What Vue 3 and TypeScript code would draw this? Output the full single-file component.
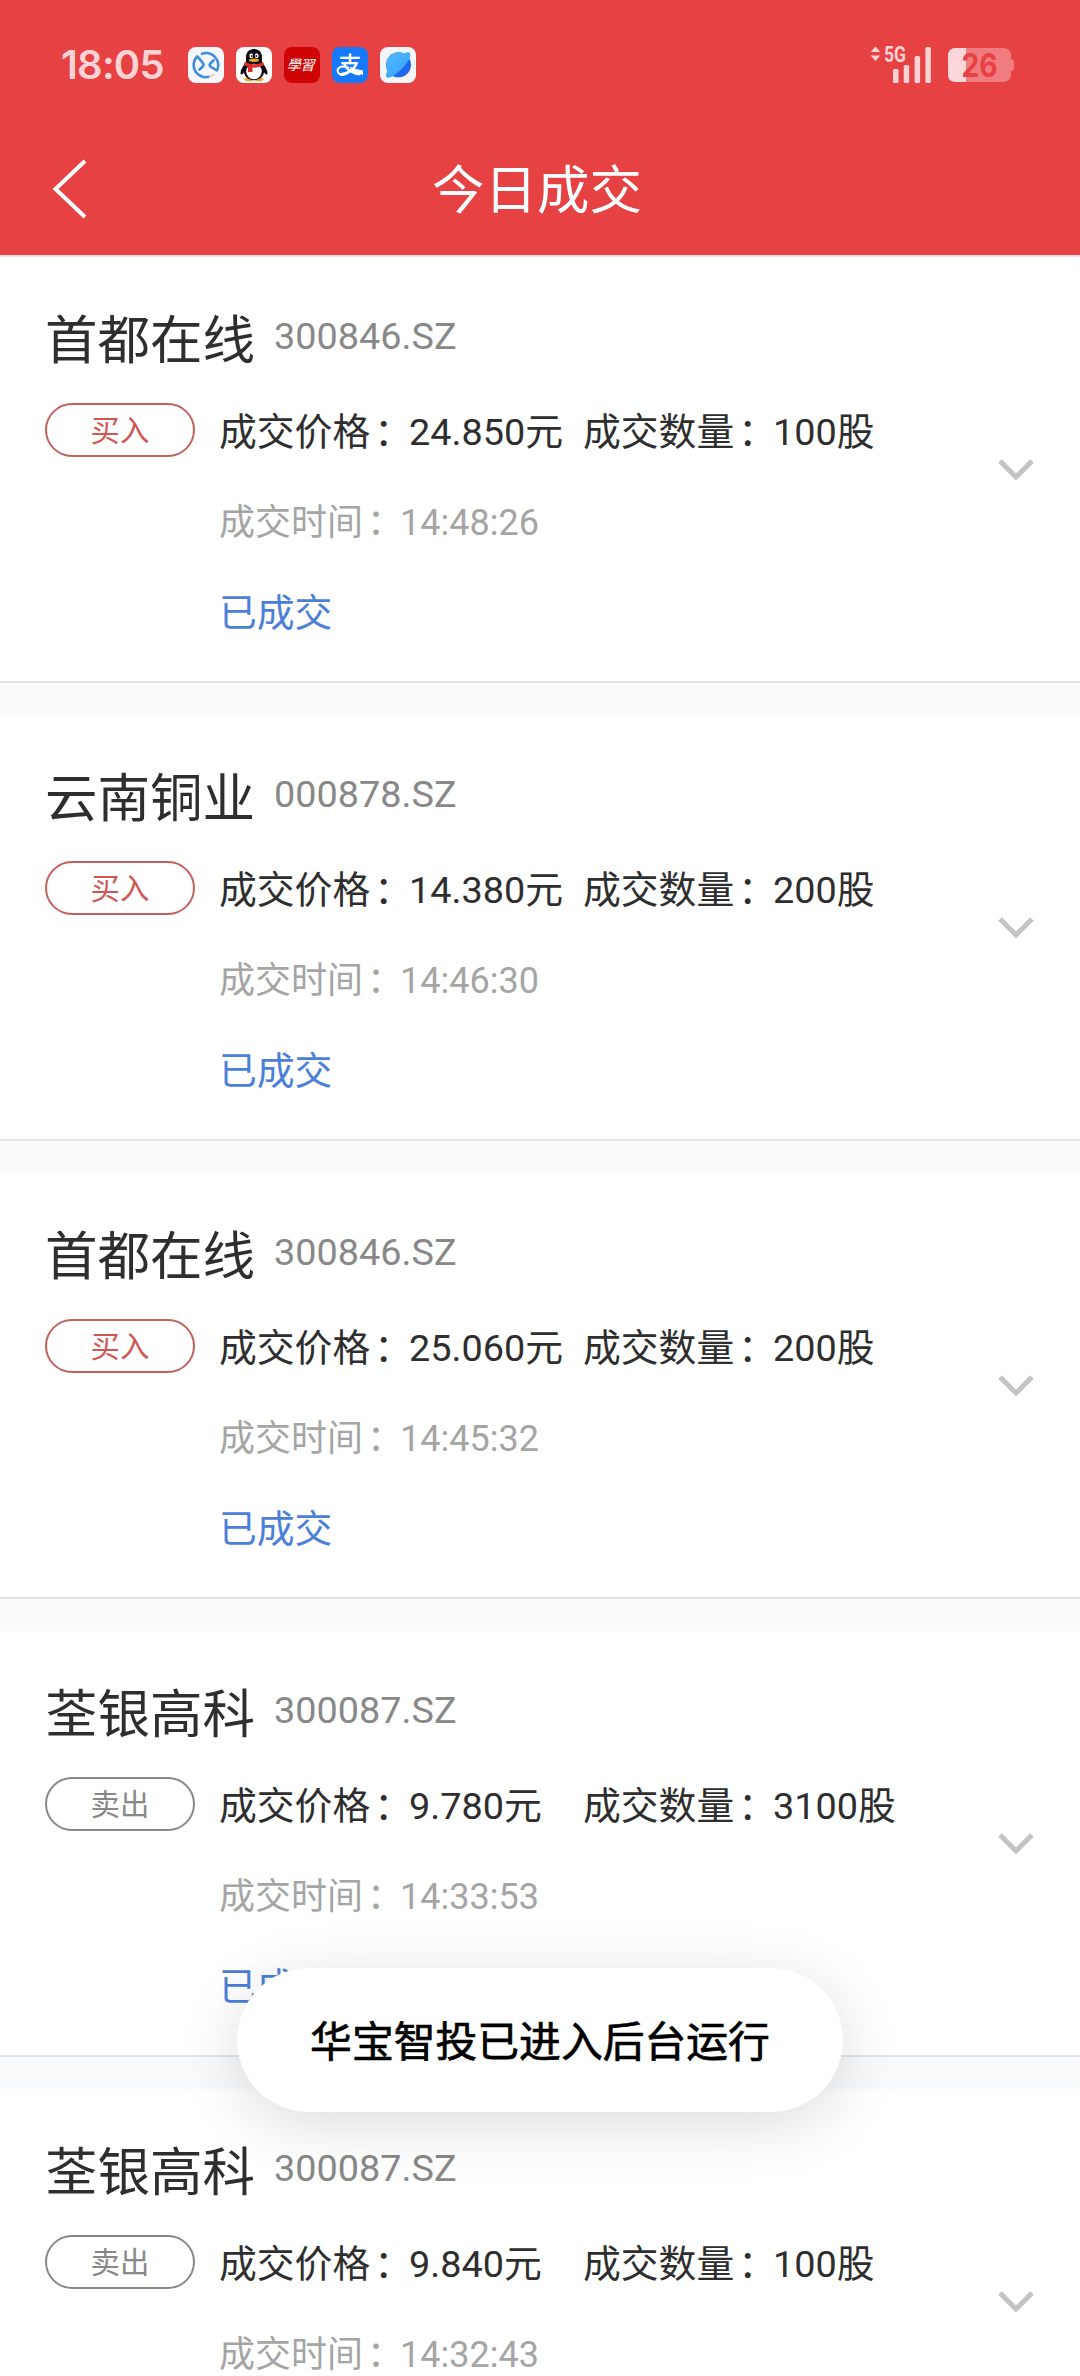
<script setup lang="ts">
interface Trade {
  name: string
  code: string
  side: 'buy' | 'sell'
  price: string
  amount: string
  time: string
}

const trades: Trade[] = [
  { name: '首都在线', code: '300846.SZ', side: 'buy', price: '24.850', amount: '100', time: '14:48:26' },
  { name: '云南铜业', code: '000878.SZ', side: 'buy', price: '14.380', amount: '200', time: '14:46:30' },
  { name: '首都在线', code: '300846.SZ', side: 'buy', price: '25.060', amount: '200', time: '14:45:32' },
  { name: '荃银高科', code: '300087.SZ', side: 'sell', price: '9.780', amount: '3100', time: '14:33:53' },
  { name: '荃银高科', code: '300087.SZ', side: 'sell', price: '9.840', amount: '100', time: '14:32:43' },
]

const sideLabel = { buy: '买入', sell: '卖出' }
</script>

<template>
  <div class="screen">
    <header class="header">
      <div class="status-bar">
        <span class="clock">18:05</span>
        <div class="apps">
          <svg class="app" viewBox="0 0 36 36">
            <rect width="36" height="36" rx="8" fill="#f6f7fa" />
            <g fill="none" stroke="#3f8ce2" stroke-width="2.6" stroke-linecap="round" stroke-linejoin="round">
              <path d="M14 6.800A12.200 12.200 0 0 1 29 23.500L22.300 19.500Q21 18 22.300 16.500L25.500 13.500" />
              <path d="M21 29.800A12.200 12.200 0 0 1 9.300 9.300L14.800 15.800Q16.200 17.800 14.800 19.600L11.500 22.500" />
            </g>
            <path d="M21 29.800Q24.500 29 26.500 27" fill="none" stroke="#f1cfc0" stroke-width="2.400" />
          </svg>
          <svg class="app" viewBox="0 0 36 36">
            <rect width="36" height="36" rx="8" fill="#fff" />
            <ellipse cx="13.500" cy="32.200" rx="5" ry="2" fill="#e9a93a" />
            <ellipse cx="22.500" cy="32.200" rx="5" ry="2" fill="#e9a93a" />
            <path d="M18 2C12.500 2 10 6 10 10.500V15C7 19 4.500 23 4.500 26C4.500 28.500 6.500 27.500 8 25.500C9 30.500 13 33 18 33S27 30.500 28 25.500C29.500 27.500 31.500 28.500 31.500 26C31.500 23 29 19 26 15V10.500C26 6 23.500 2 18 2Z" fill="#0c0c0e" />
            <ellipse cx="18" cy="24.500" rx="7.800" ry="7.800" fill="#fff" />
            <ellipse cx="15.300" cy="8.700" rx="1.900" ry="2.500" fill="#fff" />
            <ellipse cx="20.700" cy="8.700" rx="1.900" ry="2.500" fill="#fff" />
            <circle cx="15.900" cy="9" r="0.900" fill="#111" />
            <circle cx="20.300" cy="9" r="0.900" fill="#111" />
            <ellipse cx="18" cy="13.300" rx="5" ry="1.700" fill="#eda62b" />
            <path d="M8.700 15Q18 19.500 27.300 15L28 18.200Q22 21.300 16.500 20.500V25H12V19.500Q9.500 19 8 18Z" fill="#e02a2c" />
          </svg>
          <svg class="app" viewBox="0 0 36 36">
            <rect width="36" height="36" rx="8" fill="#cf0404" />
            <text class="brush" x="4" y="23.500" transform="skewX(-14) translate(4.500 0)">學習</text>
          </svg>
          <svg class="app" viewBox="0 0 36 36">
            <rect width="36" height="36" rx="8" fill="#1678fb" />
            <text class="pay" x="6.500" y="26">支</text>
            <path d="M17 21Q9 17.500 6 22C4.500 25.500 8 28.600 12 27.700Q16 26.500 19 23" fill="none" stroke="#fff" stroke-width="2" />
            <path d="M18 19.800Q24 22.500 31 23.600V28Q25 27 18.500 23Z" fill="#fff" />
          </svg>
          <svg class="app" viewBox="0 0 36 36">
            <defs>
              <linearGradient id="orb" x1="0" y1="0" x2="1" y2="1">
                <stop offset="0" stop-color="#52bdff" />
                <stop offset="1" stop-color="#359bf8" />
              </linearGradient>
            </defs>
            <rect width="36" height="36" rx="8" fill="#f4f5f7" />
            <circle cx="18.500" cy="17.800" r="12.500" fill="#2167ea" />
            <path d="M24 6.500Q28.500 4.200 30 6.200Q31.200 8 29 12.500Q24 22 13 29Q8.500 31.800 6.600 30.200Q5 28.500 7.500 23.500A12.500 12.500 0 0 1 24 6.500Z" fill="url(#orb)" />
          </svg>
        </div>
        <div class="system">
          <svg class="signal" width="64" height="40" viewBox="0 0 64 40">
            <g fill="#ffd3d4">
              <path d="M7.500 1.500L12.300 7H2.700Z" />
              <path d="M7.500 16L12.300 10.500H2.700Z" />
              <rect x="25" y="24" width="5.500" height="14" rx="1.500" />
              <rect x="35.700" y="20" width="5.500" height="18" rx="1.500" />
              <rect x="46.600" y="11" width="5.500" height="27" rx="1.500" />
              <rect x="57.400" y="2" width="5.500" height="36" rx="1.500" />
            </g>
            <text class="net" x="16" y="17" textLength="22" lengthAdjust="spacingAndGlyphs">5G</text>
          </svg>
          <svg class="battery" width="68" height="34" viewBox="0 0 68 34">
            <path d="M8 0H55Q63 0 63 8V11Q66 11.500 66 14V20Q66 22.500 63 23V26Q63 34 55 34H8Q0 34 0 26V8Q0 0 8 0Z" fill="#f17c7f" />
            <path d="M8 0H18V34H8Q0 34 0 26V8Q0 0 8 0Z" fill="#fcd6d8" />
            <text class="level" x="13.500" y="28.500" textLength="36" lengthAdjust="spacingAndGlyphs">26</text>
          </svg>
        </div>
      </div>
      <div class="nav">
        <svg class="back" width="36" height="60" viewBox="0 0 36 60">
          <path d="M33 2L3.500 30L33 58" fill="none" stroke="#fff" stroke-width="4" />
        </svg>
        <h1 class="title">今日成交</h1>
      </div>
    </header>

    <main class="list">
      <article v-for="(trade, i) in trades" :key="i" class="card">
        <div class="heading">
          <span class="name">{{ trade.name }}</span>
          <span class="code">{{ trade.code }}</span>
        </div>
        <div class="body">
          <span class="side" :class="trade.side">{{ sideLabel[trade.side] }}</span>
          <div class="details">
            <div class="figures">
              <span class="price">成交价格<span class="colon">：</span>{{ trade.price }}元</span>
              <span>成交数量<span class="colon">：</span>{{ trade.amount }}股</span>
            </div>
            <div class="time">成交时间<span class="colon">：</span>{{ trade.time }}</div>
            <div class="state">已成交</div>
          </div>
          <svg class="chevron" width="36" height="24" viewBox="0 0 36 24">
            <path d="M2 3L18 19L34 3" fill="none" stroke="#c4c4c4" stroke-width="5" />
          </svg>
        </div>
      </article>
    </main>

    <div class="toast">华宝智投已进入后台运行</div>
  </div>
</template>

<style>
body {
  margin: 0;
}
</style>

<style scoped>
.screen {
  position: relative;
  width: 1080px;
  height: 2376px;
  overflow: hidden;
  background: #f8fafc;
  font-family: Roboto, 'Noto Sans CJK SC', sans-serif;
  color: #2e2e2e;
}

.header {
  height: 255px;
  background: #e64143;
  border-bottom: 2px solid #fbdcdd;
}

.status-bar {
  display: flex;
  align-items: center;
  height: 130px;
  padding: 0 66px 0 61px;
  box-sizing: border-box;
}

.clock {
  width: 127px;
  font: 600 40px/48px Inter, sans-serif;
  letter-spacing: -0.8px;
  color: #ffd3d4;
}

.apps {
  display: flex;
  gap: 12px;
}

.app {
  display: block;
  width: 36px;
  height: 36px;
}

svg {
  overflow: visible;
}

.brush {
  font: 400 14px 'Noto Sans CJK TC', sans-serif;
  fill: #fff;
}

.pay {
  font: 500 23px 'Noto Sans CJK SC', sans-serif;
  fill: #fff;
}

.system {
  display: flex;
  align-items: center;
  gap: 16px;
  margin-left: auto;
  margin-right: -2px;
}

.net {
  font: 700 22px Roboto, sans-serif;
  fill: #ffd3d4;
}

.level {
  font: 700 32px Inter, sans-serif;
  fill: #e64143;
}

.nav {
  display: flex;
  align-items: center;
  height: 118px;
  padding: 0 52px;
}

.title {
  flex: 1;
  margin: 4px 42px 0 0;
  font-size: 52.500px;
  font-weight: 400;
  line-height: 60px;
  text-align: center;
  color: #fff;
}

.list {
  display: flex;
  flex-direction: column;
  gap: 32px;
}

.card {
  flex: none;
  box-sizing: border-box;
  height: 426px;
  padding: 49px 45px 0;
  background: #fff;
  border-bottom: 2px solid #e4e4e4;
}

.heading {
  display: flex;
  height: 70px;
}

.name {
  font-size: 52.500px;
  line-height: 70px;
}

.code {
  margin-left: 19px;
  font-size: 37.800px;
  line-height: 60px;
  color: #888;
}

.body {
  display: flex;
  margin-top: 27px;
}

.side {
  box-sizing: border-box;
  width: 150px;
  height: 54px;
  border: 2px solid;
  border-radius: 27px;
  font-size: 29.400px;
  line-height: 52px;
  text-align: center;
}

.buy {
  border-color: #c5615d;
  color: #d05653;
}

.sell {
  border-color: #888;
  color: #888;
}

.details {
  flex: 1;
  margin-left: 24px;
}

.figures {
  display: flex;
  font-size: 37.800px;
  line-height: 58px;
}

.price {
  width: 364px;
}

.colon {
  margin-right: -3px;
  padding-left: 4px;
}

.time {
  margin-top: 33px;
  font-size: 36px;
  line-height: 58px;
  color: #a5a5a5;
}

.state {
  margin-top: 32px;
  font-size: 37.800px;
  line-height: 58px;
  color: #4b7fd9;
}

.chevron {
  margin: 55px 1px 0 0;
}

.toast {
  position: absolute;
  top: 1968px;
  left: 237px;
  width: 606px;
  height: 144px;
  border-radius: 72px;
  background: #fff;
  box-shadow: 0 12px 64px rgba(0, 0, 0, 0.14);
  font-size: 41.800px;
  line-height: 149px;
  text-align: center;
  color: #000;
  -webkit-text-stroke: 0.700px #000;
}
</style>
